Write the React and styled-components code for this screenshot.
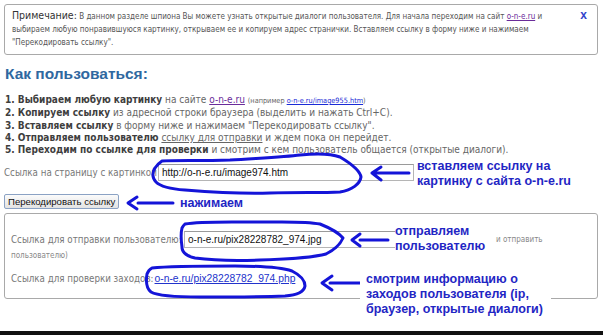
import styled, { createGlobalStyle } from "styled-components";

const GlobalStyle = createGlobalStyle`
  html, body {
    margin: 0;
    padding: 0;
    background: #ffffff;
  }
`;

const INK = "#1414d8";

const App = () => (
    <>
        <GlobalStyle />
        <Page>
            <Content>
                <Note>
                    <NoteTitle>Примечание:</NoteTitle> В данном разделе
                    шпиона Вы можете узнать открытые диалоги пользователя.
                    Для начала переходим на сайт{" "}
                    <VisitedLink href="#">o-n-e.ru</VisitedLink> и
                    <br />
                    выбираем любую понравившуюся картинку, открываем ее и
                    копируем адрес странички. Вставляем ссылку в форму ниже и
                    нажимаем
                    <br />
                    "Перекодировать ссылку".
                    <Close>x</Close>
                </Note>

                <Heading>Как пользоваться:</Heading>

                <Steps>
                    <li>
                        <b>1. Выбираем любую картинку</b> на сайте{" "}
                        <VisitedLink href="#">o-n-e.ru</VisitedLink>{" "}
                        <Small>
                            (например{" "}
                            <BlueLink href="#">o-n-e.ru/image955.htm</BlueLink>)
                        </Small>
                    </li>
                    <li>
                        <b>2. Копируем ссылку</b> из адресной строки браузера
                        (выделить и нажать Ctrl+C).
                    </li>
                    <li>
                        <b>3. Вставляем ссылку</b> в форму ниже и нажимаем
                        "Перекодировать ссылку".
                    </li>
                    <li>
                        <b>4. Отправляем пользователю</b>{" "}
                        <GrayLink href="#">ссылку для отправки</GrayLink> и
                        ждем пока он перейдет.
                    </li>
                    <li>
                        <b>5. Переходим по ссылке для проверки</b> и смотрим с
                        кем пользователь общается (открытые диалоги).
                    </li>
                </Steps>

                <FieldRow>
                    <Label>Ссылка на страницу с картинкой</Label>
                    <Field $width="256px" defaultValue="http://o-n-e.ru/image974.htm" />
                </FieldRow>

                <Button type="button">Перекодировать ссылку</Button>

                <Result>
                    <FieldRow>
                        <Label $width="172px">Ссылка для отправки пользователю:</Label>
                        <Field $width="301px" defaultValue="o-n-e.ru/pix28228782_974.jpg" />
                        <Hint>и отправить</Hint>
                    </FieldRow>
                    <HintLine>пользователю)</HintLine>
                    <LinkRow>
                        <Label>Ссылка для проверки заходов:</Label>
                        <PlainLink href="#">o-n-e.ru/pix28228782_974.php</PlainLink>
                    </LinkRow>
                </Result>
            </Content>
            <Footer />

            <Marks viewBox="0 0 603 335" width="603" height="335">
                <g fill="none" stroke={INK} strokeWidth="3" strokeLinecap="round" strokeLinejoin="round">
                    <path d="M162 161 C175 160 200 161 230 160 C260 158 285 157 300 155 C318 153 332 154 340 157 C350 163 360 170 361 177 C360 184 352 190 340 192 C320 193 300 192 270 193 C240 194 210 192 185 190 C170 189 160 186 156 182 C152 178 152 172 155 168 C157 165 159 163 162 161 Z" />
                    <path d="M372 173 L409 173 M381 167 L372 173 L381 180" />
                    <path d="M173 203 L138 203 M137 197 L128 203 L137 209" />
                    <path d="M185 224 C200 221 230 222 260 222 C285 222 305 221 320 224 C330 228 338 232 343 238 C340 245 334 250 326 254 C312 258 290 259 260 260 C235 261 210 260 195 258 C186 256 182 252 182 247 C181 240 181 232 182 228 C183 226 184 225 185 224 Z" />
                    <path d="M388 240 L360 240 M360 234 L352 240 L360 246" />
                    <path d="M152 268 C170 266 200 266 235 266 C260 266 280 267 292 271 C300 275 305 280 305 286 C304 292 298 295 285 296 C260 297 230 297 200 297 C175 297 158 296 151 292 C146 288 146 280 147 274 C148 271 150 269 152 268 Z" />
                    <path d="M367 283 L330 283 M332 276 L322 283 L332 290" />
                </g>
            </Marks>

            <Remark $left="417px" $top="159px">
                вставляем ссылку на
                <br />
                картинку с сайта o-n-e.ru
            </Remark>
            <Remark $left="180px" $top="196px">нажимаем</Remark>
            <Remark $left="395px" $top="224px">
                отправляем
                <br />
                пользователю
            </Remark>
            <Remark $left="366px" $top="272px" $pad="0 8px 0 6px">
                смотрим информацию о
                <br />
                заходов пользователя (ip,
                <br />
                браузер, открытые диалоги)
            </Remark>
        </Page>
    </>
);

export default App;

const Page = styled.div`
    position: relative;
    width: 603px;
    height: 335px;
    overflow: hidden;
    background: #ffffff;
    display: flex;
    flex-direction: column;
    font-family: "DejaVu Sans Condensed", "DejaVu Sans", Tahoma, sans-serif;
    font-stretch: condensed;
    color: #555555;
`;

const Content = styled.div`
    flex: 1;
    padding: 4px 5px 0 4px;
`;

const Note = styled.div`
    position: relative;
    border: 1px solid #a9a9a9;
    border-radius: 3px;
    padding: 5px 22px 5px 7px;
    font-size: 8px;
    line-height: 13px;
    color: #555555;
    white-space: nowrap;
`;

const NoteTitle = styled.span`
    font-size: 10.5px;
    line-height: 1;
    color: #333333;
`;

const Close = styled.span`
    position: absolute;
    top: 4px;
    right: 10px;
    font-family: "Liberation Sans", Arial, sans-serif;
    font-size: 12px;
    line-height: 1;
    font-weight: 700;
    color: #3344cc;
`;

const VisitedLink = styled.a`
    color: #6a2c9a;
    text-decoration: underline;
`;

const BlueLink = styled.a`
    color: #1a2bd6;
    text-decoration: underline;
`;

const GrayLink = styled.a`
    color: #666666;
    text-decoration: underline;
`;

const Heading = styled.h2`
    margin: 10px 0 0 1px;
    font-family: "Liberation Sans", Arial, sans-serif;
    font-size: 15.5px;
    line-height: 18px;
    font-weight: 700;
    color: #2f68a0;
`;

const Steps = styled.ol`
    list-style: none;
    margin: 11px 0 0 1px;
    padding: 0;
    font-size: 10px;
    line-height: 12.3px;
    color: #666666;

    b {
        color: #3e3e3e;
    }
`;

const Small = styled.span`
    font-size: 7.3px;
`;

const FieldRow = styled.div`
    display: flex;
    align-items: center;
    gap: 1px;
    margin-top: 8px;
`;

const Label = styled.span`
    flex-shrink: 0;
    width: ${(p) => p.$width || "auto"};
    font-size: 9.7px;
    color: #777777;
    white-space: nowrap;
`;

const Field = styled.input.attrs({ type: "text" })`
    box-sizing: border-box;
    flex-shrink: 0;
    width: ${(p) => p.$width};
    height: 17px;
    margin: 0;
    padding: 0 3px;
    border: 1px solid #b5b5b5;
    border-top-color: #9a9a9a;
    font-family: "Liberation Sans", Arial, sans-serif;
    font-size: 10px;
    color: #111111;
    background: #ffffff;
    outline: none;
`;

const Button = styled.button`
    box-sizing: border-box;
    display: block;
    height: 15px;
    margin: 13px 0 4px 0;
    padding: 0 3px;
    border: 1px solid #8ba2c4;
    border-radius: 2px;
    background: linear-gradient(#fbfbfb, #e3e3e3);
    font-family: "Liberation Sans", Arial, sans-serif;
    font-size: 9.6px;
    line-height: 13px;
    color: #111111;
`;

const Result = styled.div`
    border: 1px solid #a9a9a9;
    border-radius: 3px;
    padding: 9px 6px 14px 6px;
`;

const Hint = styled.span`
    flex-shrink: 0;
    margin-left: 10px;
    font-size: 8px;
    color: #888888;
`;

const HintLine = styled.div`
    margin-top: 3px;
    font-size: 8px;
    line-height: 10px;
    color: #888888;
`;

const LinkRow = styled.div`
    display: flex;
    align-items: center;
    gap: 1px;
    margin-top: 12px;
`;

const PlainLink = styled.a`
    font-family: "Liberation Sans", Arial, sans-serif;
    font-size: 10.3px;
    color: #2233cc;
    text-decoration: underline;
`;

const Footer = styled.div`
    height: 4px;
    background: #111111;
`;

const Marks = styled.svg`
    position: absolute;
    inset: 0;
    pointer-events: none;
`;

const Remark = styled.div`
    position: absolute;
    left: ${(p) => p.$left};
    top: ${(p) => p.$top};
    padding: ${(p) => p.$pad || "0"};
    margin-left: ${(p) => (p.$pad ? "-6px" : "0")};
    background: #ffffff;
    font-family: "Liberation Sans", Arial, sans-serif;
    font-size: 12.5px;
    line-height: 15px;
    font-weight: 700;
    color: #1f26c4;
    white-space: nowrap;
`;
